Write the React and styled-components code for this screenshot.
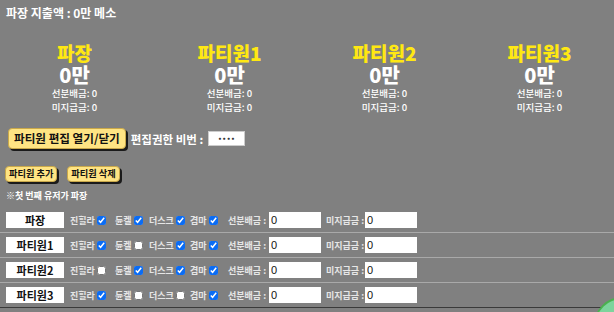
import React from "react";
import styled, { createGlobalStyle } from "styled-components";

const Global = createGlobalStyle`
  html, body { margin: 0; padding: 0; background: #808080; overflow: hidden; }
  body { font-family: "Noto Sans CJK KR", "Noto Sans", sans-serif; color: #fff; }
`;

const Page = styled.div`
  padding: 5px 0 0 0;
`;

const Title = styled.div`
  font-size: 12px;
  font-weight: 700;
  padding-left: 6px;
  line-height: 16px;
`;

const Cards = styled.div`
  display: grid;
  grid-template-columns: repeat(4, 155px);
  margin: 21px 0 0 -3px;
`;

const Card = styled.div`
  display: flex;
  flex-direction: column;
  align-items: center;
`;

const Name = styled.div`
  color: #ffe812;
  font-size: 19px;
  font-weight: 800;
  line-height: 22px;
  height: 22px;
`;

const Money = styled.div`
  font-size: 20px;
  font-weight: 800;
  line-height: 22px;
  height: 22px;
`;

const Sub = styled.div`
  font-size: 9.5px;
  font-weight: 500;
  line-height: 14px;
  height: 14px;
`;

const EditBar = styled.div`
  display: flex;
  align-items: center;
  gap: 5px;
  padding: 14px 0 0 8px;
`;

const Btn = styled.button`
  font-family: inherit;
  font-weight: 700;
  font-size: ${p => (p.$big ? "11.6px" : "9.2px")};
  height: ${p => (p.$big ? "21px" : "16px")};
  padding: 0 ${p => (p.$big ? "5px" : "3px")};
  background: #ffe483;
  color: #111;
  border: 1px solid #c9a84a;
  border-radius: 4px;
  box-shadow: 2px 2px 0 #1a1a1a;
  line-height: 1;
  cursor: pointer;
`;

const Label = styled.span`
  font-size: 11.5px;
  font-weight: 700;
  color: #fff;
  white-space: nowrap;
`;

const Pw = styled.input`
  width: 37px;
  height: 15px;
  box-sizing: border-box;
  border: 1px solid #ccc;
  text-align: center;
  font-size: 6px;
  letter-spacing: 0.5px;
  padding: 0;
  font-family: "DejaVu Sans", sans-serif;
  font-weight: 700;
  color: #333;
`;

const BtnRow = styled.div`
  display: flex;
  gap: 10px;
  padding: 17px 0 0 5px;
`;

const Note = styled.div`
  font-size: 9px;
  font-weight: 700;
  padding: 8px 0 0 6px;
  line-height: 12px;
`;

const Rows = styled.div`
  margin-top: 6px;
`;

const Row = styled.div`
  display: grid;
  grid-template-columns: 64px 45px 34px 41px 38px 98px 90px;
  align-items: center;
  box-sizing: border-box;
  height: 25px;
  padding-left: 6px;
  border-bottom: 1px solid ${p => (p.$last ? "#3a3a3a" : "#a9a9a9")};
  box-shadow: ${p => (p.$last ? "0 1px 0 #b0b0b0" : "none")};
`;

const NameBox = styled.div`
  width: 58px;
  height: 16px;
  background: #fff;
  color: #111;
  font-size: 11px;
  font-weight: 700;
  display: flex;
  align-items: center;
  justify-content: center;
  box-sizing: border-box;
`;

const Check = styled.label`
  display: flex;
  align-items: center;
  gap: 2px;
  font-size: 9px;
  font-weight: 700;
  color: #e6e6e6;
  white-space: nowrap;
`;

const Box = styled.input`
  width: 9px;
  height: 9px;
  margin: 0;
  accent-color: #0a6cf5;
`;

const Field = styled.label`
  display: flex;
  align-items: center;
  gap: ${p => p.$gap}px;
  font-size: 9px;
  font-weight: 700;
  color: #e6e6e6;
  white-space: nowrap;
`;

const NumInput = styled.input`
  width: 52px;
  height: 16px;
  box-sizing: border-box;
  border: none;
  padding: 0 2px;
  font-size: 11px;
  font-family: "Liberation Sans", sans-serif;
  color: #111;
`;

const Fab = styled.div`
  position: fixed;
  right: -36px;
  bottom: -41px;
  width: 56px;
  height: 56px;
  border-radius: 50%;
  background: #7dd49c;
  border: 2px solid #4bb04f;
  box-sizing: border-box;
`;

const members = ["파장", "파티원1", "파티원2", "파티원3"];
const checks = [
  [true, true, true, true],
  [true, false, true, true],
  [false, true, true, true],
  [true, false, false, true],
];
const jobs = ["진힐라", "듄켈", "더스크", "겸마"];

export default function App() {
  return (
    <Page>
      <Global />
      <Title>파장 지출액 : 0만 메소</Title>
      <Cards>
        {members.map(m => (
          <Card key={m}>
            <Name>{m}</Name>
            <Money>0만</Money>
            <Sub>선분배금: 0</Sub>
            <Sub>미지급금: 0</Sub>
          </Card>
        ))}
      </Cards>
      <EditBar>
        <Btn $big>파티원 편집 열기/닫기</Btn>
        <Label>편집권한 비번 :</Label>
        <Pw type="text" defaultValue="••••" readOnly />
      </EditBar>
      <BtnRow>
        <Btn>파티원 추가</Btn>
        <Btn>파티원 삭제</Btn>
      </BtnRow>
      <Note>※첫 번째 유저가 파장</Note>
      <Rows>
        {members.map((m, i) => (
          <Row key={m} $last={i === members.length - 1}>
            <NameBox>{m}</NameBox>
            {jobs.map((j, k) => (
              <Check key={j}>
                {j}
                <Box type="checkbox" defaultChecked={checks[i][k]} />
              </Check>
            ))}
            <Field $gap={3}>
              선분배금 :<NumInput defaultValue="0" />
            </Field>
            <Field $gap={1}>
              미지급금 :<NumInput defaultValue="0" />
            </Field>
          </Row>
        ))}
      </Rows>
      <Fab />
    </Page>
  );
}
